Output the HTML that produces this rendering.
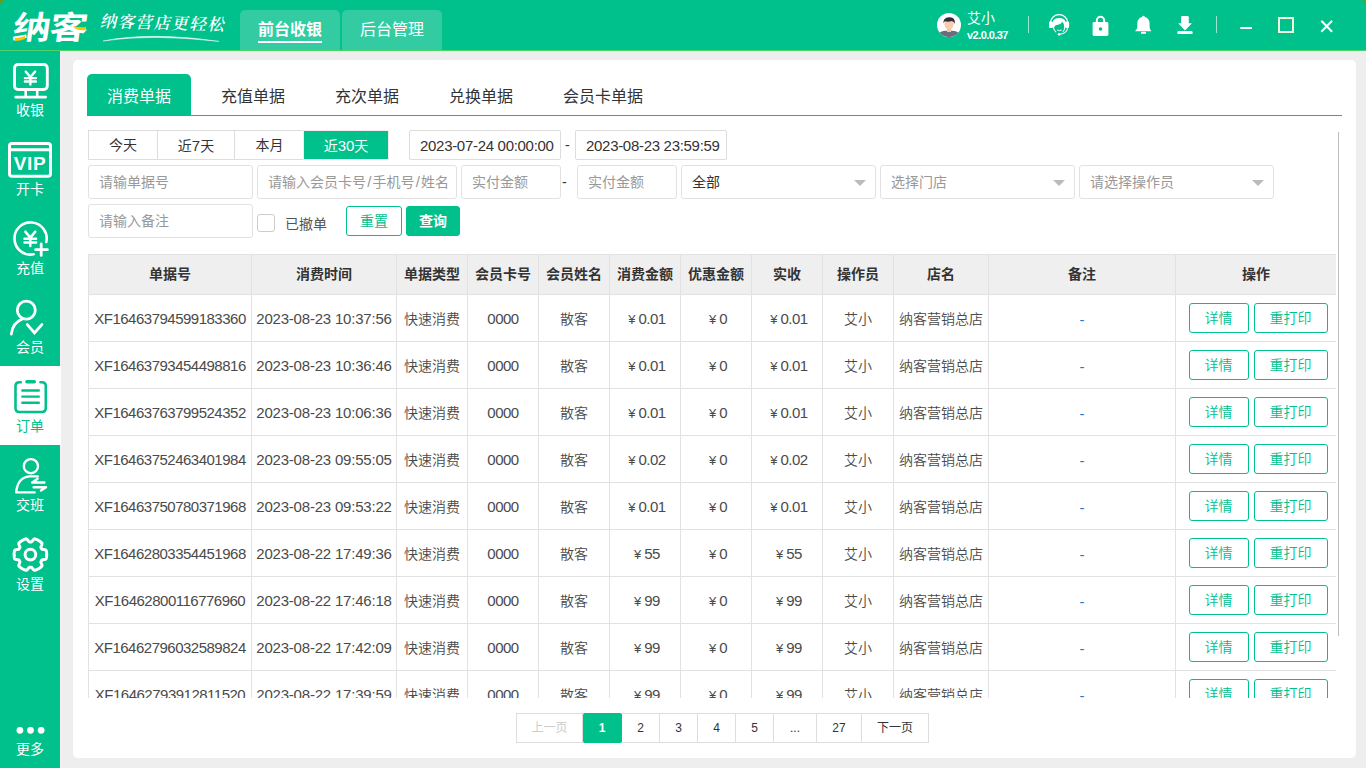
<!DOCTYPE html>
<html lang="zh-CN">
<head>
<meta charset="utf-8">
<title>纳客 - 订单</title>
<style>
*{box-sizing:border-box;margin:0;padding:0}
html,body{width:1366px;height:768px;overflow:hidden;background:#eee;font-family:"Liberation Sans","Noto Sans CJK SC",sans-serif;font-size:14px;color:#333}
.abs{position:absolute}
#hdr{position:absolute;left:0;top:0;width:1366px;height:50px;background:#00c08b;border-radius:5px 5px 0 0}
.crn{position:absolute;top:0;width:6px;height:6px;background:#7a9500}
#hline{position:absolute;left:0;top:50px;width:1366px;height:2px;background:linear-gradient(#4cd468 0,#4cd468 50%,#f7eff3 50%,#f7eff3 100%)}
#vline{position:absolute;left:60px;top:52px;width:1px;height:716px;background:#fbeef2}
#side{position:absolute;left:0;top:51px;width:60px;height:717px;background:#00c08b}
.sitem{position:absolute;left:0;width:60px;height:79px;color:#fff;text-align:center}
.sitem svg{position:absolute;left:0;top:0}
.sitem .lb{position:absolute;left:0;width:60px;top:50px;line-height:20px;font-size:14px}
.sitem.on{background:#fff;color:#00c08b;width:61px}
.sitem.on .lb,.sitem.on svg{width:60px}
.htab{position:absolute;top:10px;height:40px;width:100px;background:rgba(255,255,255,.2);border-radius:5px 5px 0 0;color:#fff;font-size:16px;line-height:40px;text-align:center}
.htab.on{font-weight:bold}
.htab.on:after{content:"";position:absolute;left:18px;right:18px;top:31px;height:2px;background:#fff}
#panel{position:absolute;left:73px;top:60px;width:1283px;height:698px;background:#fff;border-radius:5px}
#tabs{position:absolute;left:87px;top:74px;width:1255px;height:42px;border-bottom:1px solid #00c08b}
.tab{position:absolute;top:0;height:41px;width:104px;line-height:45px;text-align:center;font-size:16px;color:#333;border-radius:5px 5px 0 0}
.tab.on{background:#00c08b;color:#fff}
.qb{position:absolute;top:130px;height:30px;border:1px solid #ddd;border-left:none;line-height:29px;text-align:center;font-size:14px;color:#333;background:#fff}
.qb.on{background:#00c08b;color:#fff;border:1px solid #f7e9e9}
.inp{position:absolute;height:34px;border:1px solid #e2e2e2;border-radius:3px;background:#fff;line-height:32px;padding-left:10px;font-size:14px;color:#999;white-space:nowrap;overflow:hidden}
.inp.d{color:#333;height:30px;line-height:30px;border-color:#ddd;border-radius:2px}
.inp.sel:after{content:"";position:absolute;right:9px;top:14px;border:6px solid transparent;border-top:6px solid #bbb;border-bottom:none}
.btn{position:absolute;height:30px;border:1px solid #00c08b;border-radius:3px;line-height:28px;text-align:center;font-size:14px;color:#00c08b;background:#fff}
.btn.p{background:#00c08b;color:#fff}
#tblwrap{position:absolute;left:88px;top:254px;width:1248px;height:444px;overflow:hidden}
table{border-collapse:collapse;table-layout:fixed;width:1248px}
th,td{border:1px solid #e2e2e2;text-align:center;font-size:14px;white-space:nowrap;overflow:hidden;padding:0}
th{height:40px;background:#efefef;font-weight:bold;color:#333;padding-bottom:4px}
td{height:47px;color:#4a4a4a;font-weight:350}
td .b{display:inline-block;height:30px;line-height:28px;border:1px solid #00c08b;border-radius:3px;color:#00c08b;font-size:14px;vertical-align:middle}
.pg{position:absolute;top:713px;height:30px;border:1px solid #ddd;border-left:none;line-height:28px;text-align:center;font-size:12px;color:#333;background:#fff}
.pg.on{background:#00c08b;color:#fff;border-color:#00c08b;border-radius:2px;font-weight:bold}
.n{font-size:15px;letter-spacing:-.5px}
.l{font-size:15px}
td.c2{letter-spacing:-.2px}
td.op{padding-left:4px}
.inp.d.n{letter-spacing:-.3px}
td.m{padding-left:4px}
.y{font-size:13px;margin-right:3px;letter-spacing:0}
td.dash{color:#1f78d1;font-size:15px;padding-top:3px}
.pg.dis{color:#ccc}
.sl{font-size:15px;margin:0 1.2px}
.btn.p{font-weight:bold}
</style>
</head>
<body>
<div class="crn" style="left:0"></div><div class="crn" style="left:1360px"></div>
<div id="hdr">
<div class="abs" id="logo" style="left:13px;top:9px;width:66px;height:38px;font-size:32px;line-height:38px;font-weight:700;color:#fff;letter-spacing:-1px;transform-origin:0 50%;transform:skewX(-8deg) scaleX(1.19);white-space:nowrap">纳客</div>
<svg class="abs" style="left:0;top:0" width="240" height="50" viewBox="0 0 240 50">
<path d="M15 38 Q20 38 25 36 L25 39 Q20 41 15 41Z" fill="#ffc400"/>
<path d="M73 26 Q80 28 86 27 L86 30 Q80 31 76 29Z" fill="#ffc400"/>
<path d="M103 41 Q150 31.5 219 41.4 Q150 33.6 103 41Z" fill="#fff" stroke="#fff" stroke-width=".5" opacity=".9"/>
</svg>
<div class="abs" id="slogan" style="left:101px;top:10px;width:130px;height:24px;font-family:'Liberation Serif','Noto Serif CJK SC',serif;font-size:16.5px;line-height:24px;color:#fff;letter-spacing:1.4px;transform-origin:0 50%;transform:rotate(1.6deg) skewX(-12deg);white-space:nowrap;font-weight:600">纳客营店更轻松</div>
<div class="htab on" style="left:240px">前台收银</div>
<div class="htab" style="left:342px">后台管理</div>
<svg class="abs" style="left:937px;top:13px" width="24" height="24" viewBox="0 0 24 24">
<circle cx="12" cy="12" r="12" fill="#fff"/>
<g>
<path d="M2.6 19.5 Q5 17.4 12 17.4 Q19 17.4 21.4 19.5 A12 12 0 0 1 2.6 19.5Z" fill="#6b6d7f"/>
<rect x="10" y="14" width="4" height="5" fill="#f2c4a4"/>
<ellipse cx="12" cy="11.3" rx="4.6" ry="5.4" fill="#f7cdb0"/>
<path d="M6.4 10.5 Q6 4.5 12 4.3 Q16.5 4 17.6 7.5 Q18 9 17.5 11 Q16.8 8.5 15 8 Q11 9.2 8 8.3 Q6.9 9 6.4 10.5Z" fill="#2f2f33"/>
</g>
</svg>
<div class="abs" style="left:967px;top:9px;font-size:14px;line-height:18px;color:#fff;white-space:nowrap">艾小</div>
<div class="abs" style="left:967px;top:28px;font-size:11px;line-height:14px;color:#fff;font-weight:bold;letter-spacing:-.55px;white-space:nowrap">v2.0.0.37</div>
<div class="abs" style="left:1028px;top:16px;width:1px;height:17px;background:rgba(255,255,255,.6)"></div>
<div class="abs" style="left:1216px;top:16px;width:1px;height:17px;background:rgba(255,255,255,.6)"></div>
<svg class="abs" style="left:1040px;top:0" width="326" height="50" viewBox="1040 0 326 50" fill="none" stroke="none">
<!-- headset -->
<g id="ic-headset">
<path d="M1050.6 22.4 A8.5 7.7 0 0 1 1067.6 22.4" stroke="#fff" stroke-width="1.3"/>
<rect x="1049" y="21.6" width="3.8" height="6.4" rx="1" fill="#fff"/>
<rect x="1065.4" y="21.6" width="3.7" height="6.400" rx="1" fill="#fff"/>
<path d="M1052 26.500 Q1051.600 18.100 1059.200 18.100 Q1066.600 18.100 1066.400 26.500 L1064.300 28 Q1064.600 24 1062.500 21.800 Q1061 24.500 1057.200 25 Q1054.300 25.400 1054 28.200Z" fill="#fff"/>
<path d="M1053.300 27 Q1053.800 30.800 1056.200 32.200 M1065 27 Q1064.500 30.300 1062.800 31.800" stroke="#fff" stroke-width="1.100"/>
<path d="M1057.300 30 Q1059.400 31.200 1061.700 30" stroke="#fff" stroke-width="1"/>
<path d="M1067.700 27.500 Q1067.300 33.300 1060 34.300" stroke="#fff" stroke-width="1.100"/>
<circle cx="1059.100" cy="34.300" r="1.350" fill="#fff"/>
</g>
<!-- lock -->
<g id="ic-lock">
<path d="M1096.8 23 V20.5 A3.7 3.7 0 0 1 1104.2 20.5 V23" stroke="#fff" stroke-width="2"/>
<rect x="1092.6" y="22" width="15.8" height="14" rx="1.4" fill="#fff"/>
<circle cx="1100.5" cy="29" r="1.8" fill="#00c08b"/>
</g>
<!-- bell -->
<g id="ic-bell">
<path d="M1135.200 30.900 Q1137.300 29.300 1137.300 27 V23.500 C1137.300 20.200 1139.300 17.900 1142 17.100 Q1142.400 15.800 1143.400 15.800 Q1144.500 15.800 1144.900 17.100 C1147.600 17.900 1149.600 20.200 1149.600 23.500 V27 Q1149.600 29.300 1151.200 30.900 V31.300 H1135.200Z" fill="#fff"/>
<rect x="1141" y="31.800" width="5" height="2" rx=".9" fill="#fff"/>
</g>
<!-- download -->
<g id="ic-dl">
<path d="M1181.100 17.100 Q1181.100 15.900 1182.300 15.900 H1187.600 Q1188.800 15.900 1188.800 17.100 V23.200 H1191.900 L1185 30.400 L1178.200 23.200 H1181.100Z" fill="#fff"/>
<rect x="1177.400" y="31.100" width="15.200" height="3" rx="1.200" fill="#fff"/>
</g>
<rect x="1240.300" y="27" width="11.700" height="2" fill="#fff"/>
<rect x="1279" y="18" width="14" height="14" stroke="#f3fbd8" stroke-width="2"/>
<path d="M1321.300 20.700 L1332.100 31.700 M1332.100 20.700 L1321.300 31.700" stroke="#fff" stroke-width="2.100"/>
</svg>
</div>
<div id="hline"></div><div id="vline"></div>
<div id="side">
<div class="sitem " style="top:-1px"><svg width="60" height="60" viewBox="0 0 60 60"><rect x="14.5" y="14.5" width="32.8" height="25" rx="3.5" stroke="currentColor" stroke-width="2.9" fill="none"/><path d="M25.7 41 V46.5 M37.2 41 V46.5" stroke="currentColor" stroke-width="2.6" fill="none"/><path d="M15.6 47.1 H45.7" stroke="currentColor" stroke-width="2.6" stroke-linecap="round" fill="none"/><path d="M25.70 21.60 L30.40 27.06 L35.10 21.60 M30.40 27.06 V34.60 M24.90 28.10 H35.90 M24.90 31.48 H35.90" stroke="currentColor" stroke-width="2.40" fill="none" stroke-linecap="round" stroke-linejoin="round"/></svg><div class="lb">收银</div></div>
<div class="sitem " style="top:78px"><svg width="60" height="60" viewBox="0 0 60 60"><rect x="9.5" y="14.5" width="41" height="32.8" rx="2.5" stroke="currentColor" stroke-width="3" fill="none"/><path d="M9 20.8 H51" stroke="currentColor" stroke-width="3" fill="none"/><text x="30" y="40.8" text-anchor="middle" font-family="Liberation Sans,sans-serif" font-weight="bold" font-size="19" letter-spacing=".7" fill="currentColor" stroke="none">VIP</text></svg><div class="lb">开卡</div></div>
<div class="sitem " style="top:157px"><svg width="60" height="60" viewBox="0 0 60 60"><path d="M46.3 34 A16.1 16.1 0 1 0 33.6 46.3" stroke="currentColor" stroke-width="2.6" fill="none" stroke-linecap="round"/><path d="M35.6 41.7 H47.4 M41.2 36 V47.4" stroke="currentColor" stroke-width="2.8" fill="none" stroke-linecap="round"/><path d="M25.30 23.60 L30.30 29.65 L35.30 23.60 M30.30 29.65 V38.00 M24.50 30.80 H36.10 M24.50 34.54 H36.10" stroke="currentColor" stroke-width="2.50" fill="none" stroke-linecap="round" stroke-linejoin="round"/></svg><div class="lb">充值</div></div>
<div class="sitem " style="top:236px"><svg width="60" height="60" viewBox="0 0 60 60"><circle cx="26.3" cy="23.2" r="9" stroke="currentColor" stroke-width="2.8" fill="none"/><path d="M11.3 47.2 Q12.5 35.5 22.5 32" stroke="currentColor" stroke-width="2.8" fill="none" stroke-linecap="round"/><path d="M27.3 37.6 L34.5 45.8 L41.9 37.6" stroke="currentColor" stroke-width="2.8" fill="none" stroke-linecap="round" stroke-linejoin="miter"/></svg><div class="lb">会员</div></div>
<div class="sitem on" style="top:315px"><svg width="60" height="60" viewBox="0 0 60 60"><path d="M20.8 16.2 H19.5 Q15.5 16.2 15.5 20.2 V42 Q15.5 46 19.500 46 H41.800 Q45.800 46 45.800 42 V20.200 Q45.800 16.200 41.800 16.200 H40.5" stroke="currentColor" stroke-width="2.6" fill="none" stroke-linecap="round"/><path d="M26.9 15.7 H34.3" stroke="currentColor" stroke-width="3.4" stroke-linecap="round" fill="none"/><path d="M22.3 24.5 H38.8 M22.300 30.600 H38.800 M22.300 36.700 H38.800" stroke="currentColor" stroke-width="2.400" stroke-linecap="round" fill="none"/></svg><div class="lb">订单</div></div>
<div class="sitem " style="top:394px"><svg width="60" height="60" viewBox="0 0 60 60"><circle cx="30.9" cy="21.2" r="7.1" stroke="currentColor" stroke-width="2.4" fill="none"/><path d="M37.8 31.4 H29.5 Q17.5 32.5 16.2 47.4 H34.6" stroke="currentColor" stroke-width="2.4" fill="none" stroke-linecap="round" stroke-linejoin="round"/><path d="M37.6 33.8 L32.2 37.5 H44.4 M33.6 42.2 H46 L41 45.600" stroke="currentColor" stroke-width="2.400" fill="none" stroke-linecap="round" stroke-linejoin="round"/></svg><div class="lb">交班</div></div>
<div class="sitem " style="top:473px"><svg width="60" height="60" viewBox="0 0 60 60"><path d="M46.70 30.60 L46.70 30.88 L46.69 31.17 L46.68 31.45 L46.66 31.74 L46.64 32.02 L46.61 32.30 L46.58 32.59 L46.54 32.87 L46.50 33.15 L46.45 33.43 L46.40 33.71 L46.34 33.99 L46.28 34.27 L46.22 34.54 L46.13 34.81 L45.91 35.05 L45.57 35.24 L45.14 35.39 L44.66 35.51 L44.14 35.60 L43.61 35.67 L43.11 35.73 L42.65 35.80 L42.27 35.88 L41.98 36.00 L41.81 36.17 L41.72 36.37 L41.61 36.56 L41.51 36.76 L41.40 36.95 L41.29 37.14 L41.17 37.33 L41.05 37.52 L40.93 37.70 L40.87 37.93 L40.91 38.23 L41.03 38.61 L41.20 39.04 L41.40 39.50 L41.60 40.00 L41.78 40.49 L41.92 40.97 L42.00 41.42 L42.00 41.81 L41.91 42.11 L41.72 42.33 L41.52 42.52 L41.31 42.71 L41.09 42.90 L40.88 43.09 L40.66 43.27 L40.44 43.44 L40.21 43.62 L39.98 43.79 L39.75 43.95 L39.51 44.11 L39.28 44.27 L39.04 44.42 L38.80 44.57 L38.55 44.72 L38.30 44.86 L38.05 44.99 L37.80 45.12 L37.55 45.25 L37.29 45.37 L37.03 45.49 L36.77 45.60 L36.51 45.71 L36.24 45.82 L35.97 45.92 L35.71 46.01 L35.44 46.10 L35.17 46.19 L34.89 46.27 L34.61 46.33 L34.30 46.25 L33.97 46.06 L33.62 45.76 L33.28 45.40 L32.94 45.00 L32.61 44.58 L32.31 44.17 L32.02 43.81 L31.76 43.52 L31.51 43.33 L31.29 43.27 L31.06 43.28 L30.84 43.29 L30.62 43.30 L30.40 43.30 L30.18 43.30 L29.96 43.29 L29.74 43.28 L29.51 43.27 L29.29 43.33 L29.04 43.52 L28.78 43.81 L28.49 44.17 L28.19 44.58 L27.86 45.00 L27.52 45.40 L27.18 45.76 L26.83 46.06 L26.50 46.25 L26.19 46.33 L25.91 46.27 L25.63 46.19 L25.36 46.10 L25.09 46.01 L24.83 45.92 L24.56 45.82 L24.29 45.71 L24.03 45.60 L23.77 45.49 L23.51 45.37 L23.25 45.25 L23.00 45.12 L22.75 44.99 L22.50 44.86 L22.25 44.72 L22.00 44.57 L21.76 44.42 L21.52 44.27 L21.29 44.11 L21.05 43.95 L20.82 43.79 L20.59 43.62 L20.36 43.44 L20.14 43.27 L19.92 43.09 L19.71 42.90 L19.49 42.71 L19.28 42.52 L19.08 42.33 L18.89 42.11 L18.80 41.81 L18.80 41.42 L18.88 40.97 L19.02 40.49 L19.20 40.00 L19.40 39.50 L19.60 39.04 L19.77 38.61 L19.89 38.23 L19.93 37.93 L19.87 37.70 L19.75 37.52 L19.63 37.33 L19.51 37.14 L19.40 36.95 L19.29 36.76 L19.19 36.56 L19.08 36.37 L18.99 36.17 L18.82 36.00 L18.53 35.88 L18.15 35.80 L17.69 35.73 L17.19 35.67 L16.66 35.60 L16.14 35.51 L15.66 35.39 L15.23 35.24 L14.89 35.05 L14.67 34.81 L14.58 34.54 L14.52 34.27 L14.46 33.99 L14.40 33.71 L14.35 33.43 L14.30 33.15 L14.26 32.87 L14.22 32.59 L14.19 32.30 L14.16 32.02 L14.14 31.74 L14.12 31.45 L14.11 31.17 L14.10 30.88 L14.10 30.60 L14.10 30.32 L14.11 30.03 L14.12 29.75 L14.14 29.46 L14.16 29.18 L14.19 28.90 L14.22 28.61 L14.26 28.33 L14.30 28.05 L14.35 27.77 L14.40 27.49 L14.46 27.21 L14.52 26.93 L14.58 26.66 L14.67 26.39 L14.89 26.15 L15.23 25.96 L15.66 25.81 L16.14 25.69 L16.66 25.60 L17.19 25.53 L17.69 25.47 L18.15 25.40 L18.53 25.32 L18.82 25.20 L18.99 25.03 L19.08 24.83 L19.19 24.64 L19.29 24.44 L19.40 24.25 L19.51 24.06 L19.63 23.87 L19.75 23.68 L19.87 23.50 L19.93 23.27 L19.89 22.97 L19.77 22.59 L19.60 22.16 L19.40 21.70 L19.20 21.20 L19.02 20.71 L18.88 20.23 L18.80 19.78 L18.80 19.39 L18.89 19.09 L19.08 18.87 L19.28 18.68 L19.49 18.49 L19.71 18.30 L19.92 18.11 L20.14 17.93 L20.36 17.76 L20.59 17.58 L20.82 17.41 L21.05 17.25 L21.29 17.09 L21.52 16.93 L21.76 16.78 L22.00 16.63 L22.25 16.48 L22.50 16.34 L22.75 16.21 L23.00 16.08 L23.25 15.95 L23.51 15.83 L23.77 15.71 L24.03 15.60 L24.29 15.49 L24.56 15.38 L24.83 15.28 L25.09 15.19 L25.36 15.10 L25.63 15.01 L25.91 14.93 L26.19 14.87 L26.50 14.95 L26.83 15.14 L27.18 15.44 L27.52 15.80 L27.86 16.20 L28.19 16.62 L28.49 17.03 L28.78 17.39 L29.04 17.68 L29.29 17.87 L29.51 17.93 L29.74 17.92 L29.96 17.91 L30.18 17.90 L30.40 17.90 L30.62 17.90 L30.84 17.91 L31.06 17.92 L31.29 17.93 L31.51 17.87 L31.76 17.68 L32.02 17.39 L32.31 17.03 L32.61 16.62 L32.94 16.20 L33.28 15.80 L33.62 15.44 L33.97 15.14 L34.30 14.95 L34.61 14.87 L34.89 14.93 L35.17 15.01 L35.44 15.10 L35.71 15.19 L35.97 15.28 L36.24 15.38 L36.51 15.49 L36.77 15.60 L37.03 15.71 L37.29 15.83 L37.55 15.95 L37.80 16.08 L38.05 16.21 L38.30 16.34 L38.55 16.48 L38.80 16.63 L39.04 16.78 L39.28 16.93 L39.51 17.09 L39.75 17.25 L39.98 17.41 L40.21 17.58 L40.44 17.76 L40.66 17.93 L40.88 18.11 L41.09 18.30 L41.31 18.49 L41.52 18.68 L41.72 18.87 L41.91 19.09 L42.00 19.39 L42.00 19.78 L41.92 20.23 L41.78 20.71 L41.60 21.20 L41.40 21.70 L41.20 22.16 L41.03 22.59 L40.91 22.97 L40.87 23.27 L40.93 23.50 L41.05 23.68 L41.17 23.87 L41.29 24.06 L41.40 24.25 L41.51 24.44 L41.61 24.64 L41.72 24.83 L41.81 25.03 L41.98 25.20 L42.27 25.32 L42.65 25.40 L43.11 25.47 L43.61 25.53 L44.14 25.60 L44.66 25.69 L45.14 25.81 L45.57 25.96 L45.91 26.15 L46.13 26.39 L46.22 26.66 L46.28 26.93 L46.34 27.21 L46.40 27.49 L46.45 27.77 L46.50 28.05 L46.54 28.33 L46.58 28.61 L46.61 28.90 L46.64 29.18 L46.66 29.46 L46.68 29.75 L46.69 30.03 L46.70 30.32Z" stroke="currentColor" stroke-width="3" fill="none" stroke-linejoin="round"/><circle cx="30.4" cy="30.600" r="5.35" stroke="currentColor" stroke-width="3" fill="none"/></svg><div class="lb">设置</div></div>
<div class="sitem" style="top:649px;height:68px"><svg width="60" height="60" viewBox="0 0 60 60"><circle cx="19.9" cy="30.300" r="3.4" fill="currentColor"/><circle cx="30.5" cy="30.300" r="3.400" fill="currentColor"/><circle cx="41.150" cy="30.300" r="3.400" fill="currentColor"/></svg><div class="lb" style="top:39px">更多</div></div>
</div>
<div id="panel"></div>
<div id="tabs">
<div class="tab on" style="left:0px;width:104px">消费单据</div>
<div class="tab" style="left:114px;width:104px">充值单据</div>
<div class="tab" style="left:228px;width:104px">充次单据</div>
<div class="tab" style="left:342px;width:104px">兑换单据</div>
<div class="tab" style="left:456px;width:120px">会员卡单据</div>
</div>
<div class="qb" style="left:88px;width:70px;border-left:1px solid #ddd">今天</div>
<div class="qb" style="left:158px;width:77px">近<span class="l">7</span>天</div>
<div class="qb" style="left:235px;width:69px;border-right:none">本月</div>
<div class="qb on" style="left:303px;width:86px">近<span class="l">30</span>天</div>
<div class="inp d n" style="left:409px;top:130px;width:152px">2023-07-24 00:00:00</div>
<div class="abs" style="left:565px;top:130px;line-height:30px;color:#333">-</div>
<div class="inp d n" style="left:575px;top:130px;width:152px">2023-08-23 23:59:59</div>
<div class="inp" style="left:88px;top:165px;width:165px">请输单据号</div>
<div class="inp" style="left:257px;top:165px;width:200px">请输入会员卡号<span class="sl">/</span>手机号<span class="sl">/</span>姓名</div>
<div class="inp" style="left:461px;top:165px;width:100px">实付金额</div>
<div class="abs" style="left:562px;top:165px;line-height:34px;color:#333">-</div>
<div class="inp" style="left:577px;top:165px;width:100px">实付金额</div>
<div class="inp sel" style="left:681px;top:165px;width:195px;color:#333">全部</div>
<div class="inp sel" style="left:880px;top:165px;width:195px">选择门店</div>
<div class="inp sel" style="left:1079px;top:165px;width:195px">请选择操作员</div>
<div class="inp" style="left:88px;top:204px;width:165px">请输入备注</div>
<div class="abs" style="left:257px;top:214px;width:18px;height:18px;border:1px solid #ccc;border-radius:3px;background:#fff"></div>
<div class="abs" style="left:285px;top:209px;line-height:30px;color:#555">已撤单</div>
<div class="btn" style="left:346px;top:206px;width:56px">重置</div>
<div class="btn p" style="left:406px;top:206px;width:54px">查询</div>
<div id="tblwrap"><table><colgroup><col style="width:163px"><col style="width:145px"><col style="width:71px"><col style="width:71px"><col style="width:71px"><col style="width:71px"><col style="width:71px"><col style="width:71px"><col style="width:71px"><col style="width:95px"><col style="width:187px"><col style="width:161px"></colgroup>
<thead><tr><th>单据号</th><th>消费时间</th><th>单据类型</th><th>会员卡号</th><th>会员姓名</th><th>消费金额</th><th>优惠金额</th><th>实收</th><th>操作员</th><th>店名</th><th>备注</th><th>操作</th></tr></thead>
<tbody>
<tr><td class="n c1">XF16463794599183360</td><td class="n c2">2023-08-23 10:37:56</td><td>快速消费</td><td class="n">0000</td><td>散客</td><td class="n m"><span class="y">¥</span>0.01</td><td class="n m"><span class="y">¥</span>0</td><td class="n m"><span class="y">¥</span>0.01</td><td>艾小</td><td>纳客营销总店</td><td class="dash">-</td><td class="op"><span class="b" style="width:60px">详情</span><span class="b" style="width:74px;margin-left:5px">重打印</span></td></tr>
<tr><td class="n c1">XF16463793454498816</td><td class="n c2">2023-08-23 10:36:46</td><td>快速消费</td><td class="n">0000</td><td>散客</td><td class="n m"><span class="y">¥</span>0.01</td><td class="n m"><span class="y">¥</span>0</td><td class="n m"><span class="y">¥</span>0.01</td><td>艾小</td><td>纳客营销总店</td><td class="dash">-</td><td class="op"><span class="b" style="width:60px">详情</span><span class="b" style="width:74px;margin-left:5px">重打印</span></td></tr>
<tr><td class="n c1">XF16463763799524352</td><td class="n c2">2023-08-23 10:06:36</td><td>快速消费</td><td class="n">0000</td><td>散客</td><td class="n m"><span class="y">¥</span>0.01</td><td class="n m"><span class="y">¥</span>0</td><td class="n m"><span class="y">¥</span>0.01</td><td>艾小</td><td>纳客营销总店</td><td class="dash">-</td><td class="op"><span class="b" style="width:60px">详情</span><span class="b" style="width:74px;margin-left:5px">重打印</span></td></tr>
<tr><td class="n c1">XF16463752463401984</td><td class="n c2">2023-08-23 09:55:05</td><td>快速消费</td><td class="n">0000</td><td>散客</td><td class="n m"><span class="y">¥</span>0.02</td><td class="n m"><span class="y">¥</span>0</td><td class="n m"><span class="y">¥</span>0.02</td><td>艾小</td><td>纳客营销总店</td><td class="dash">-</td><td class="op"><span class="b" style="width:60px">详情</span><span class="b" style="width:74px;margin-left:5px">重打印</span></td></tr>
<tr><td class="n c1">XF16463750780371968</td><td class="n c2">2023-08-23 09:53:22</td><td>快速消费</td><td class="n">0000</td><td>散客</td><td class="n m"><span class="y">¥</span>0.01</td><td class="n m"><span class="y">¥</span>0</td><td class="n m"><span class="y">¥</span>0.01</td><td>艾小</td><td>纳客营销总店</td><td class="dash">-</td><td class="op"><span class="b" style="width:60px">详情</span><span class="b" style="width:74px;margin-left:5px">重打印</span></td></tr>
<tr><td class="n c1">XF16462803354451968</td><td class="n c2">2023-08-22 17:49:36</td><td>快速消费</td><td class="n">0000</td><td>散客</td><td class="n m"><span class="y">¥</span>55</td><td class="n m"><span class="y">¥</span>0</td><td class="n m"><span class="y">¥</span>55</td><td>艾小</td><td>纳客营销总店</td><td class="dash">-</td><td class="op"><span class="b" style="width:60px">详情</span><span class="b" style="width:74px;margin-left:5px">重打印</span></td></tr>
<tr><td class="n c1">XF16462800116776960</td><td class="n c2">2023-08-22 17:46:18</td><td>快速消费</td><td class="n">0000</td><td>散客</td><td class="n m"><span class="y">¥</span>99</td><td class="n m"><span class="y">¥</span>0</td><td class="n m"><span class="y">¥</span>99</td><td>艾小</td><td>纳客营销总店</td><td class="dash">-</td><td class="op"><span class="b" style="width:60px">详情</span><span class="b" style="width:74px;margin-left:5px">重打印</span></td></tr>
<tr><td class="n c1">XF16462796032589824</td><td class="n c2">2023-08-22 17:42:09</td><td>快速消费</td><td class="n">0000</td><td>散客</td><td class="n m"><span class="y">¥</span>99</td><td class="n m"><span class="y">¥</span>0</td><td class="n m"><span class="y">¥</span>99</td><td>艾小</td><td>纳客营销总店</td><td class="dash">-</td><td class="op"><span class="b" style="width:60px">详情</span><span class="b" style="width:74px;margin-left:5px">重打印</span></td></tr>
<tr><td class="n c1">XF16462793912811520</td><td class="n c2">2023-08-22 17:39:59</td><td>快速消费</td><td class="n">0000</td><td>散客</td><td class="n m"><span class="y">¥</span>99</td><td class="n m"><span class="y">¥</span>0</td><td class="n m"><span class="y">¥</span>99</td><td>艾小</td><td>纳客营销总店</td><td class="dash">-</td><td class="op"><span class="b" style="width:60px">详情</span><span class="b" style="width:74px;margin-left:5px">重打印</span></td></tr>
<tr><td class="n c1">XF16462791801135104</td><td class="n c2">2023-08-22 17:37:41</td><td>快速消费</td><td class="n">0000</td><td>散客</td><td class="n m"><span class="y">¥</span>99</td><td class="n m"><span class="y">¥</span>0</td><td class="n m"><span class="y">¥</span>99</td><td>艾小</td><td>纳客营销总店</td><td class="dash">-</td><td class="op"><span class="b" style="width:60px">详情</span><span class="b" style="width:74px;margin-left:5px">重打印</span></td></tr>
</tbody></table></div>
<div class="abs" style="left:1338px;top:132px;width:1px;height:504px;background:#bdbdbd"></div>
<div class="pg dis" style="left:516px;width:67px;border-left:1px solid #ddd;">上一页</div>
<div class="pg on" style="left:583px;width:39px;">1</div>
<div class="pg " style="left:622px;width:38px;">2</div>
<div class="pg " style="left:660px;width:38px;">3</div>
<div class="pg " style="left:698px;width:38px;">4</div>
<div class="pg " style="left:736px;width:38px;">5</div>
<div class="pg " style="left:774px;width:43px;">...</div>
<div class="pg " style="left:817px;width:45px;">27</div>
<div class="pg " style="left:862px;width:67px;">下一页</div>
</body>
</html>
